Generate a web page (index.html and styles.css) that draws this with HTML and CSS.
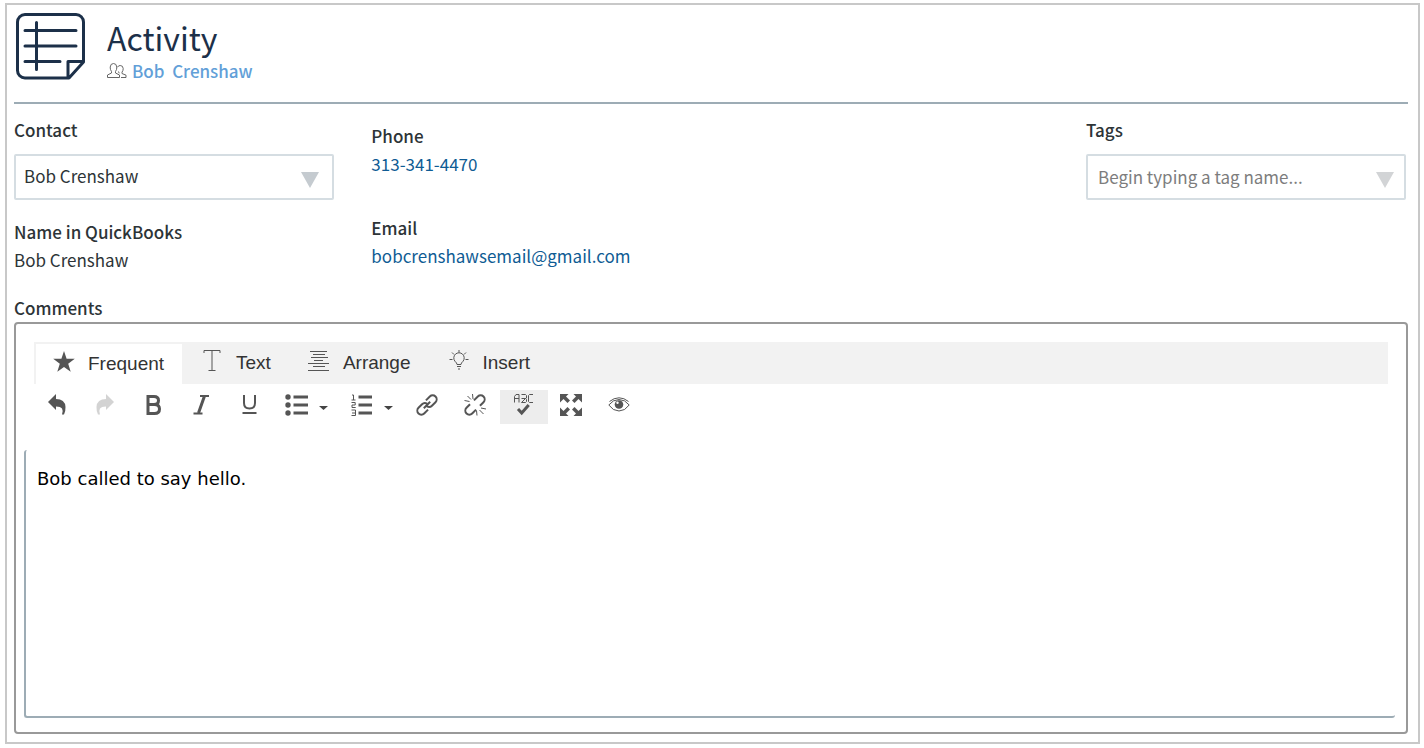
FILE: index.html
```
<!DOCTYPE html>
<html lang="en">
<head>
	<meta charset="utf-8">
	<meta name="viewport" content="width=device-width">
	<title>Activity</title>
	<link rel="stylesheet" href="styles.css">
</head>
<body>

	<main class="activity">
		<header class="page-header">
			<svg class="note-icon" viewBox="0 0 70 67">
				<path d="M51.500 65H9a7.500 7.500 0 0 1-7.500-7.500V9A7.500 7.500 0 0 1 9 1.500h51A7.500 7.500 0 0 1 67.500 9v40L53 65zM52 64V48.500h15M20.500 9.500v47M9 17.500h51M9 33h51M9 48.500h35"/>
			</svg>
			<div>
				<h1>Activity</h1>
				<div class="person">
					<svg class="people-icon" viewBox="0 0 20 16">
						<path d="M.5 14.500v-2.500l4-2v-1.500Q3 6.500 3.200 4 3.500.5 6.500.5T9.800 4q.2 2.500-1.300 4.500V10l4 2v2.500zM10.500 4.200q.8-1.700 2.700-1.700 2.800 0 3 3 .1 2-1.200 3.700v1.300l4 1.700v2.300h-5M11.500 8.500l.7 1.800"/>
					</svg>
					<a href="#">Bob&nbsp; Crenshaw</a>
				</div>
			</div>
		</header>

		<form>
			<div class="fields">
				<div class="column">
					<label for="contact">Contact</label>
					<div class="dropdown">
						<select id="contact">
							<option>Bob Crenshaw</option>
						</select>
						<svg class="arrow" viewBox="0 0 18 16"><polygon points="0,0 18,0 9,16"/></svg>
					</div>
					<div class="quickbooks">
						<h2>Name in QuickBooks</h2>
						<p>Bob Crenshaw</p>
					</div>
				</div>

				<div class="column reach">
					<div>
						<h2>Phone</h2>
						<p><a href="tel:3133414470">313-341-4470</a></p>
					</div>
					<div>
						<h2>Email</h2>
						<p><a href="mailto:bobcrenshawsemail@gmail.com">bobcrenshawsemail@gmail.com</a></p>
					</div>
				</div>

				<div class="column tags">
					<label for="tags">Tags</label>
					<div class="dropdown">
						<input type="text" id="tags" placeholder="Begin typing a tag name...">
						<svg class="arrow" viewBox="0 0 18 16"><polygon points="0,0 18,0 9,16"/></svg>
					</div>
				</div>
			</div>

			<label for="comments">Comments</label>
			<div class="editor">
				<div class="tabs">
					<button type="button" class="tab selected">
						<svg viewBox="0 0 24 24"><path class="solid" d="M12 1l2.600 7.800h8.200l-6.600 4.900 2.500 8L12 17l-6.700 4.700 2.500-8L1.200 8.800h8.200z"/></svg>
						Frequent
					</button>
					<button type="button" class="tab">
						<svg viewBox="0 0 24 24"><path d="M4 4V1.500h16V4M12 1.500v20M8.500 21.500h7"/></svg>
						Text
					</button>
					<button type="button" class="tab">
						<svg viewBox="0 0 24 24"><path d="M3 2.500h17M6 5.500h12M4 8.500h17M7 11.500h9M1 14.500h21M6 17.500h12M1 21.500h21"/></svg>
						Arrange
					</button>
					<button type="button" class="tab">
						<svg viewBox="0 0 24 24"><path d="M10 15.500q0-1.500-2-3.200a5.200 5.200 0 1 1 8 0q-2 1.700-2 3.200zM10 17.500h4M11 20h2M12 1v2.500M5 3.500L7 5.500M19 3.500L17 5.500M2.500 10.500h3M18.500 10.500h3"/></svg>
						Insert
					</button>
				</div>

				<div class="toolbar">
					<button type="button" class="tool" aria-label="Undo">
						<svg viewBox="0 0 24 24"><path class="solid" d="M2 9l8-8v5q9 0 9.500 8 .2 4-1.500 7.500H16q1.500-3.500 0-6-1.500-2-6-2V17z"/></svg>
					</button>
					<button type="button" class="tool" aria-label="Redo" disabled>
						<svg viewBox="0 0 24 24"><path class="solid" d="M20 9l-8-8v5q-9 0-9.500 8-.2 4 1.500 7.500h2q-1.500-3.500 0-6 1.500-2 6-2V17z"/></svg>
					</button>
					<button type="button" class="tool" aria-label="Bold">
						<svg viewBox="0 0 24 24"><path class="heavy" d="M6 3.500h6q4.500 0 4.500 4t-4.500 4H6zM6 11.500h6.500q5 0 5 4.500t-5 4.500H6z"/></svg>
					</button>
					<button type="button" class="tool" aria-label="Italic">
						<svg viewBox="0 0 24 24"><path class="heavy" d="M14.500 3L8.500 20"/><path class="medium" d="M10 3h9M3.500 20.500h9"/></svg>
					</button>
					<button type="button" class="tool" aria-label="Underline">
						<svg viewBox="0 0 24 24"><path class="medium" d="M6 2v8q0 5.500 5.500 5.500T17 10V2M4.500 20h14"/></svg>
					</button>
					<button type="button" class="tool menu" aria-label="Bulleted list">
						<svg viewBox="0 0 24 24"><path class="heavy" d="M8.500 4H23M8.500 12H23M8.500 20H23"/><circle class="solid" cx="3" cy="4" r="2.700"/><circle class="solid" cx="3" cy="12" r="2.700"/><circle class="solid" cx="3" cy="20" r="2.700"/></svg>
						<svg class="caret" viewBox="0 0 9 5"><polygon points="0,0 9,0 4.500,4"/></svg>
					</button>
					<button type="button" class="tool menu" aria-label="Numbered list">
						<svg viewBox="0 0 24 24"><path class="heavy" d="M8.500 4H22M8.500 12H22M8.500 20H22"/><path d="M2 2h1.500v5M1.500 7h4M1.500 9.500h3.700V12H2v2.500h3.700M1.500 17h4v5.500h-4M2 20h3.500"/></svg>
						<svg class="caret" viewBox="0 0 9 5"><polygon points="0,0 9,0 4.500,4"/></svg>
					</button>
					<button type="button" class="tool" aria-label="Insert link">
						<svg viewBox="0 0 24 24"><g class="chain" transform="rotate(-45 11 12)"><path d="M8.500 16H3a4 4 0 0 1 0-8h5q3 0 4 3M13.500 8H19a4 4 0 0 1 0 8h-5q-3 0-4-3M6.500 12h9"/></g></svg>
					</button>
					<button type="button" class="tool" aria-label="Remove link">
						<svg viewBox="0 0 24 24"><g class="chain" transform="rotate(-45 11 12)"><path d="M8.500 16H3a4 4 0 0 1 0-8h5M13.500 8H19a4 4 0 0 1 0 8h-5"/></g><path d="M.5 7.500l5 1M3.500 3L7 6.500M8.500 1l.5 5M12.500 17.500l.5 5M15.500 17l4 4M17 15l5 1"/></svg>
					</button>
					<button type="button" class="tool active" aria-label="Check spelling">
						<svg viewBox="0 0 24 24"><path d="M2.500 9.500v-6l1.500-2h3v8M2.500 5.500H7M9.500 1.500h4l1 1V5l-1 .5h-4m4 0l1 1v2l-1 1h-4zM21 1.500h-3.500l-1 1v6l1 1H21"/><path class="heavy" d="M6 16l3.700 4 7-8"/></svg>
					</button>
					<button type="button" class="tool" aria-label="Full screen">
						<svg viewBox="0 0 24 24"><path class="solid" d="M0 1h8.500L6 3.500l4 4L7.500 10l-4-4L0 9.500zM22 1h-8.500L16 3.500l-4 4 2.500 2.500 4-4L22 9.500zM0 23h8.500L6 20.500l4-4L7.500 14l-4 4L0 14.500zM22 23h-8.500l2.500-2.500-4-4 2.500-2.500 4 4 3.500-3.500z"/></svg>
					</button>
					<button type="button" class="tool" aria-label="Preview">
						<svg viewBox="0 0 24 24"><path d="M.8 12Q5 6.500 11 6.500T21.200 12Q17 18 11 18T.8 12zM1.500 8.500Q6 4.800 11 4.800T20.500 8.500"/><circle class="solid" cx="11" cy="11.500" r="4.300"/><circle class="glint" cx="9.500" cy="9.800" r="1.200"/></svg>
					</button>
				</div>

				<textarea id="comments">Bob called to say hello.</textarea>
			</div>
		</form>
	</main>

</body>
</html>
```
FILE: styles.css
```
* {
	box-sizing: border-box;
	padding: 0;
	margin: 0;
}

body {
	background-color: #FFF;
	color: #2D3437;
	font-family: "Noto Sans CJK SC", "Noto Sans", sans-serif;
	font-size: 17px;
	line-height: 28px;
}

button,
input,
select,
textarea {
	font: inherit;
	color: inherit;
}

a {
	color: #0F5C94;
	text-decoration: none;
}

h2,
label {
	display: block;
	font-size: 17px;
	font-weight: 500;
	line-height: 28px;
}

.activity {
	margin: 3px 4px 4px 5px;
	padding: 8px 10px 8px 7px;
	border: 2px solid #C8C8C8;
}

/* Header */

.page-header {
	display: flex;
	align-items: flex-start;
	gap: 21px;
	height: 91px;
	padding-left: 2px;
	border-bottom: 2px solid #9DACB5;
}

.note-icon {
	width: 70px;
	height: 67px;
	fill: none;
	stroke: #1C3049;
	stroke-width: 3;
	stroke-linecap: round;
	stroke-linejoin: round;
}

h1 {
	color: #1C3049;
	font-size: 32px;
	font-weight: 400;
	line-height: 48px;
}

.person {
	display: flex;
	align-items: center;
	gap: 5px;
	line-height: 20px;
}

.person a {
	color: #629FD8;
	font-weight: 500;
}

.people-icon {
	width: 20px;
	height: 16px;
	fill: none;
	stroke: #666;
}

/* Contact details */

.fields {
	display: grid;
	grid-template-columns: repeat(4, minmax(0, 320px));
	justify-content: space-between;
	padding: 12px 2px 20px 0;
}

.dropdown {
	position: relative;
	margin-top: 10px;
}

.dropdown select,
.dropdown input {
	display: block;
	width: 100%;
	height: 46px;
	padding: 0 40px 2px 8px;
	border: 2px solid #D5DDE2;
	border-radius: 2px;
	background-color: #FFF;
	-webkit-appearance: none;
	appearance: none;
}

.dropdown input {
	padding-left: 10px;
}

.dropdown input::placeholder {
	color: #7D7D7D;
}

.arrow {
	position: absolute;
	top: 18px;
	right: 15px;
	width: 18px;
	height: 16px;
	fill: #C5CBD0;
	pointer-events: none;
}

.quickbooks {
	margin-top: 18px;
}

.reach {
	display: flex;
	flex-direction: column;
	gap: 36px;
	padding-top: 6px;
}

.tags {
	grid-column: 4;
}

.tags .arrow {
	right: 12px;
	fill: #D2D4D6;
}

/* Comments editor */

.editor {
	padding: 18px 11px 14px 8px;
	border: 2px solid #999;
	border-radius: 4px;
}

.tabs {
	display: flex;
	height: 42px;
	margin: 0 7px 0 10px;
	background-color: #F2F2F2;
	font-family: "Liberation Sans", sans-serif;
}

.tab {
	display: flex;
	align-items: center;
	gap: 12px;
	padding: 0 18px;
	border: 0;
	background-color: transparent;
	color: #333;
	font-size: 19px;
	line-height: 24px;
}

.tab.selected {
	border: solid #F2F2F2;
	border-width: 2px 0 0 2px;
	background-color: #FFF;
	padding-left: 16px;
}

.tab svg,
.tool svg {
	flex: none;
	width: 24px;
	height: 24px;
	fill: none;
	stroke: #555;
	overflow: visible;
}

.tab svg {
	margin-bottom: 4px;
}

.tab .solid,
.tool .solid {
	fill: #555;
	stroke: none;
}

.tool .medium {
	stroke-width: 2;
}

.tool .heavy {
	stroke-width: 3;
}

.tool .chain {
	stroke-width: 2;
}

.tool .glint {
	fill: #FFF;
	stroke: none;
}

.toolbar {
	display: flex;
	margin: 6px 7px 26px 10px;
}

.tool {
	display: flex;
	align-items: center;
	justify-content: center;
	width: 48px;
	height: 34px;
	padding-bottom: 4px;
	border: 0;
	background-color: transparent;
}

.tool.menu {
	gap: 10px;
	width: 65px;
}

.tool.active {
	background-color: #EDEDED;
}

.tool:disabled {
	opacity: .25;
}

.tool .caret {
	width: 9px;
	height: 5px;
	margin-top: 6px;
	fill: #444;
	stroke: none;
}

textarea {
	display: block;
	width: 100%;
	height: 268px;
	padding: 15px 11px;
	border: solid #9DACB5;
	border-width: 0 0 2px 2px;
	border-radius: 3px;
	outline: 0;
	resize: none;
	color: #000;
	font-family: "DejaVu Sans", sans-serif;
	font-size: 18px;
	line-height: 28px;
}
```
